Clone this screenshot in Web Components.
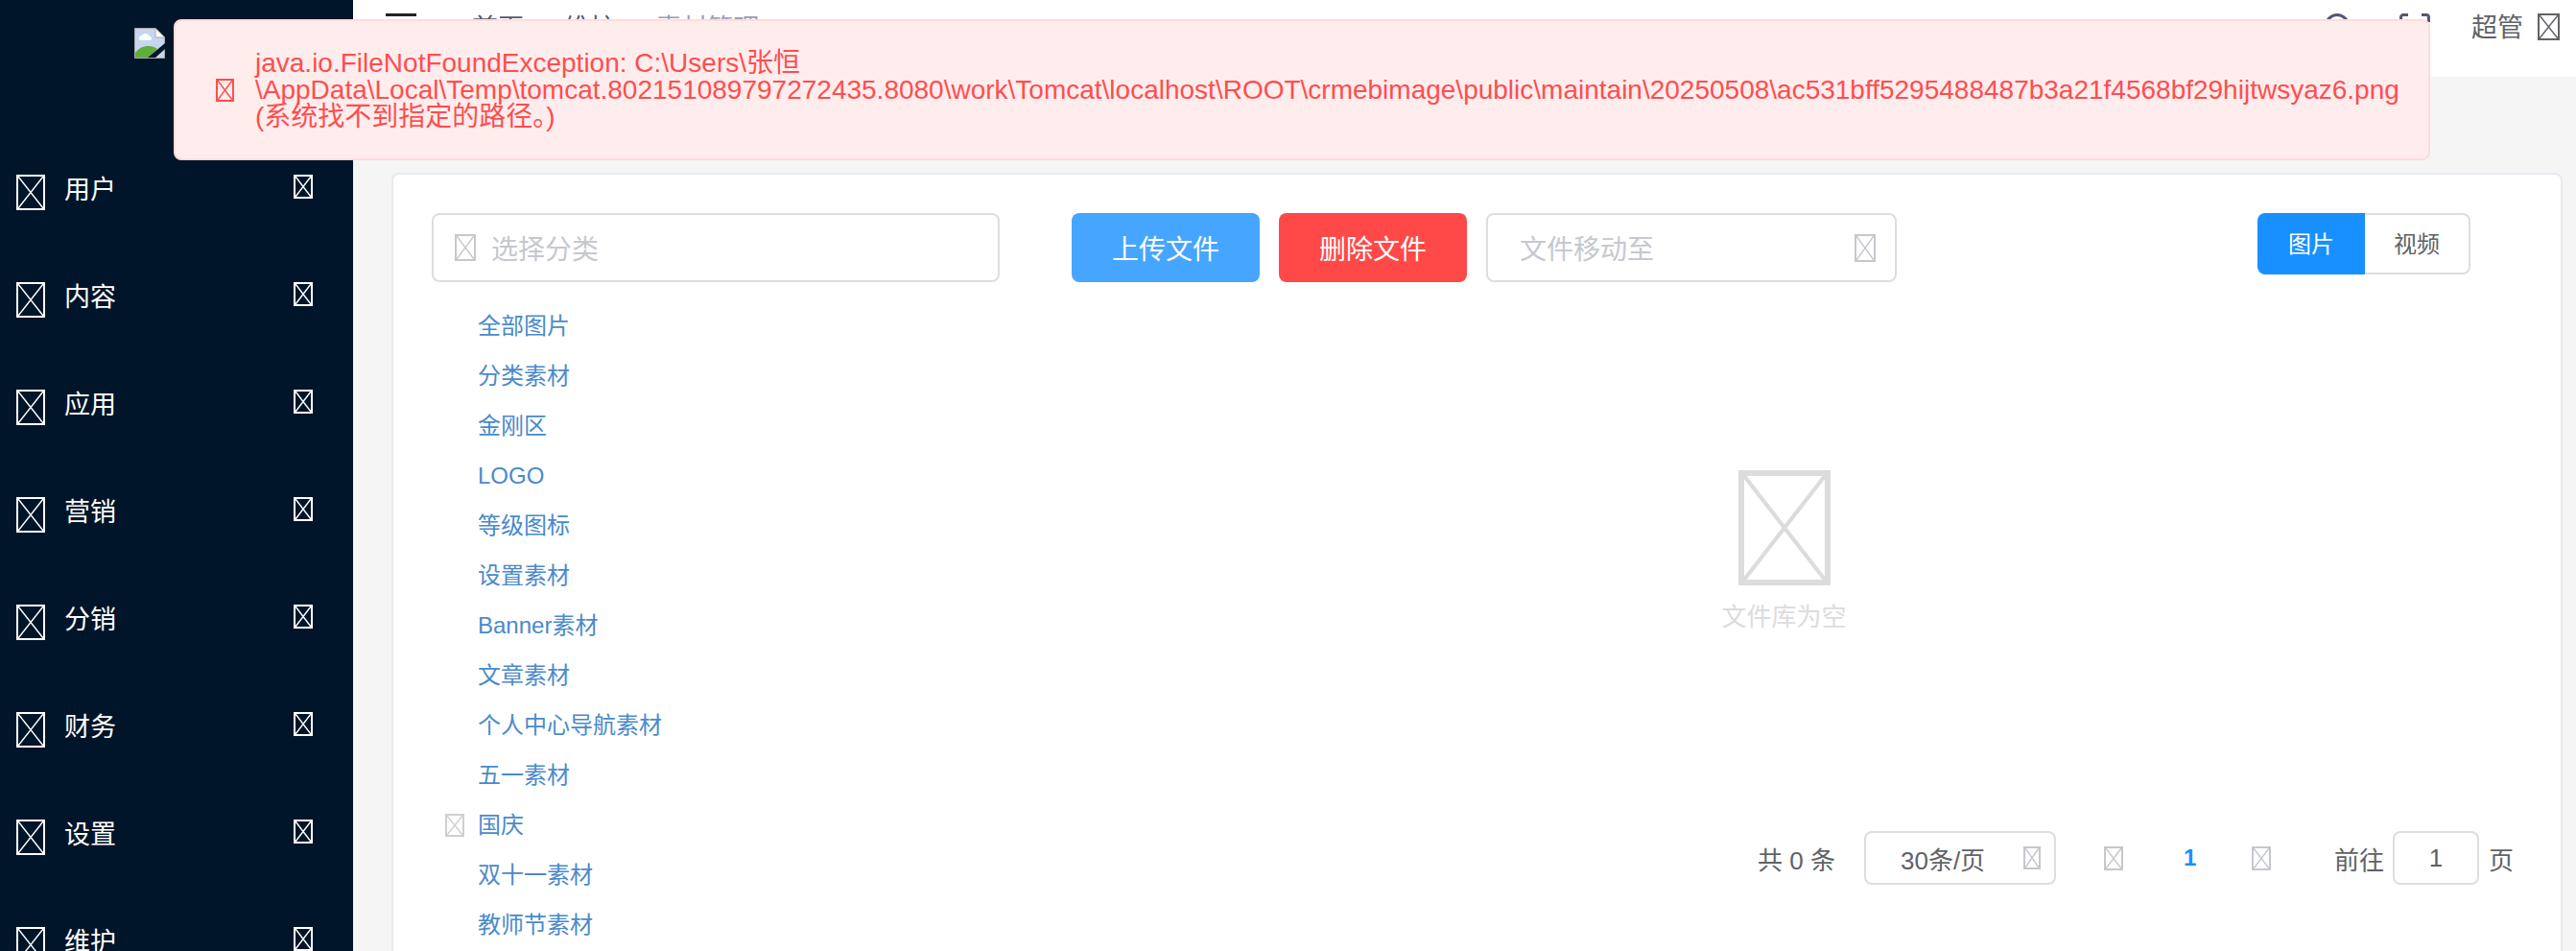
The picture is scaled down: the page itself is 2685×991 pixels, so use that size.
<!DOCTYPE html>
<html lang="zh-CN">
<head>
<meta charset="utf-8">
<title>素材管理</title>
<style>
html, body {
    margin: 0;
    height: 100%;
    overflow: hidden;
    font-family: "Liberation Sans", "Noto Sans CJK SC", sans-serif;
}
</style>
</head>
<body>
<app-shell></app-shell>

<script>
class TofuIcon extends HTMLElement {
    connectedCallback() {
        const w = this.getAttribute("w") || 20;
        const h = this.getAttribute("h") || 24;
        const color = this.getAttribute("color") || "#c5c8ce";
        const sw = this.getAttribute("sw") || 2;
        const half = sw / 2;
        this.attachShadow({ mode: "open" });
        this.shadowRoot.innerHTML = `
<style>
:host { display: inline-flex; flex: none; width: ${w}px; height: ${h}px; }
svg { display: block; }
</style>
<svg width="${w}" height="${h}" viewBox="0 0 ${w} ${h}" fill="none" stroke="${color}" stroke-width="${sw}">
    <rect x="${half}" y="${half}" width="${w - sw}" height="${h - sw}"/>
    <path d="M${sw} ${sw} L${w - sw} ${h - sw} M${w - sw} ${sw} L${sw} ${h - sw}" stroke-width="${sw * 0.7}"/>
</svg>`;
    }
}

class MenuItem extends HTMLElement {
    connectedCallback() {
        this.attachShadow({ mode: "open" });
        this.shadowRoot.innerHTML = `
<style>
:host {
    display: flex;
    height: 112px;
    padding: 38px 42px 0 17px;
    box-sizing: border-box;
    color: #fff;
    font-size: 27px;
    line-height: 32px;
}
.label { flex: 1; margin-left: 20px; }
</style>
<tofu-icon w="30" h="37" color="#fff"></tofu-icon>
<span class="label"><slot></slot></span>
<tofu-icon w="20" h="25" color="#fff"></tofu-icon>`;
    }
}

class SideMenu extends HTMLElement {
    connectedCallback() {
        const items = ["用户", "内容", "应用", "营销", "分销", "财务", "设置", "维护"];
        this.attachShadow({ mode: "open" });
        this.shadowRoot.innerHTML = `
<style>
:host {
    display: block;
    flex: none;
    width: 368px;
    height: 100%;
    overflow: hidden;
    background: #001529;
}
.logo { display: block; height: 144px; padding: 29px 0 0 140px; box-sizing: border-box; }
</style>
<div class="logo">
    <svg width="32" height="32" viewBox="0 0 32 32" style="display:block">
        <path d="M0.5 0.5H22L31.5 10V31.5H0.5Z" fill="#c6d6f0" stroke="#a8a8a8"/>
        <path d="M22 0.5V10H31.5Z" fill="#fff" stroke="#a8a8a8"/>
        <path d="M5 11a3 3 0 0 1 3-3a4.500 4.500 0 0 1 8 1a2 2 0 0 1 0 4H7a2 2 0 0 1-2-2Z" fill="#fff"/>
        <path d="M1 31V26C6 18 18 17 24 22L15 31Z" fill="#5fae3c"/>
        <path d="M14 31L32 16V22L22 31Z" fill="#001529"/>
    </svg>
</div>
${items.map(t => `<menu-item>${t}</menu-item>`).join("")}`;
    }
}

class TopBar extends HTMLElement {
    connectedCallback() {
        this.attachShadow({ mode: "open" });
        this.shadowRoot.innerHTML = `
<style>
:host {
    display: flex;
    align-items: flex-start;
    flex: none;
    height: 80px;
    box-sizing: border-box;
    padding: 14px 17px 0 34px;
    background: #fff;
    color: #606266;
    font-size: 27px;
    line-height: 30px;
}
.burger { width: 32px; height: 24px; margin-right: 58px; border-top: 3px solid #222; border-bottom: 3px solid #222; box-sizing: border-box; }
.crumbs { display: flex; gap: 13px; margin-top: 1px; color: #515a6e; }
.crumbs .now { color: #97a0b3; }
.tools { display: flex; align-items: flex-start; margin-left: auto; }
.search { margin-right: 50px; }
.full { margin-right: 43px; }
.user { margin-right: 15px; }
</style>
<div class="burger"></div>
<div class="crumbs"><span>首页</span><span>&gt;</span><span>维护</span><span>&gt;</span><span class="now">素材管理</span></div>
<div class="tools">
    <svg class="search" width="28" height="32" viewBox="0 0 28 32" fill="none" stroke="#515a6e" stroke-width="3"><circle cx="13" cy="13" r="11.500"/><path d="M21 21l6 7"/></svg>
    <svg class="full" width="32" height="28" viewBox="0 0 32 28" fill="none" stroke="#515a6e" stroke-width="3"><path d="M1.500 9V4a2.500 2.500 0 0 1 2.500-2.500h5M23 1.500h5a2.500 2.500 0 0 1 2.500 2.500v5M30.500 19v5a2.500 2.500 0 0 1-2.500 2.500h-5M9 26.500H4a2.500 2.500 0 0 1-2.500-2.500v-5"/></svg>
    <span class="user">超管</span>
    <tofu-icon w="23" h="28" color="#606266"></tofu-icon>
</div>`;
    }
}

class AppToast extends HTMLElement {
    connectedCallback() {
        this.attachShadow({ mode: "open" });
        this.shadowRoot.innerHTML = `
<style>
:host {
    position: absolute;
    top: 20px;
    left: 181px;
    width: 2352px;
    height: 147px;
    box-sizing: border-box;
    display: flex;
    align-items: center;
    padding-left: 42px;
    background: #ffeded;
    border: 2px solid #ffdbdb;
    border-radius: 8px;
    color: #ff4d4f;
    font-size: 28px;
    line-height: 28px;
    z-index: 10;
}
.msg { margin-left: 22px; white-space: nowrap; }
</style>
<tofu-icon w="19" h="24" color="#ff4d4f"></tofu-icon>
<div class="msg"><slot></slot></div>`;
    }
}

class BaseField extends HTMLElement {
    connectedCallback() {
        const w = this.getAttribute("w");
        const h = this.getAttribute("h") || 72;
        this.attachShadow({ mode: "open" });
        this.shadowRoot.innerHTML = `
<style>
:host {
    display: flex;
    align-items: center;
    flex: none;
    width: ${w}px;
    height: ${h}px;
    box-sizing: border-box;
    padding: ${this.getAttribute("pad") || "0 20px"};
    background: #fff;
    border: 2px solid #dcdee2;
    border-radius: 8px;
    color: var(--field-color, #c5c8ce);
    font-size: var(--field-size, 28px);
    justify-content: var(--field-justify, flex-start);
}
</style>
<slot></slot>`;
    }
}

class CategoryTree extends HTMLElement {
    connectedCallback() {
        const rows = ["全部图片", "分类素材", "金刚区", "LOGO", "等级图标", "设置素材", "Banner素材", "文章素材",
            "个人中心导航素材", "五一素材", "国庆", "双十一素材", "教师节素材"];
        this.attachShadow({ mode: "open" });
        this.shadowRoot.innerHTML = `
<style>
:host { display: block; padding-top: 20px; color: #4a8acb; font-size: 24px; line-height: 30px; }
.row { display: flex; align-items: center; height: 52px; padding-left: 48px; }
.row.icon { padding-left: 14px; gap: 14px; }
</style>
${rows.map(r => r === "国庆"
    ? `<div class="row icon"><tofu-icon w="20" h="24" color="#cfcfd4"></tofu-icon>${r}</div>`
    : `<div class="row">${r}</div>`).join("")}`;
    }
}

class FileToolbar extends HTMLElement {
    connectedCallback() {
        this.attachShadow({ mode: "open" });
        this.shadowRoot.innerHTML = `
<style>
:host { display: flex; align-items: flex-start; gap: 20px; padding: 0 94px 0 75px; }
.btn { display: flex; align-items: center; justify-content: center; width: 196px; height: 72px; border-radius: 8px; color: #fff; font-size: 28px; }
.up { background: #46a6ff; }
.del { background: #ff4949; }
.move span { flex: 1; padding-left: 13px; }
.toggle { display: flex; margin-left: auto; width: 222px; height: 64px; font-size: 24px; }
.toggle div { display: flex; align-items: center; justify-content: center; box-sizing: border-box; padding-bottom: 3px; }
.on { width: 112px; background: #1890ff; color: #fff; border-radius: 8px 0 0 8px; }
.off { flex: 1; background: #fff; color: #606266; border: 2px solid #dcdee2; border-left: 0; border-radius: 0 8px 8px 0; }
</style>
<div class="btn up">上传文件</div>
<div class="btn del">删除文件</div>
<base-field class="move" w="428"><span>文件移动至</span><tofu-icon w="22" h="29"></tofu-icon></base-field>
<div class="toggle"><div class="on">图片</div><div class="off">视频</div></div>`;
    }
}

class EmptyState extends HTMLElement {
    connectedCallback() {
        this.attachShadow({ mode: "open" });
        this.shadowRoot.innerHTML = `
<style>
:host { display: flex; flex-direction: column; align-items: center; margin: 196px 0 0 8px; color: #dcdcdc; font-size: 26px; }
.txt { margin-top: 18px; line-height: 30px; }
</style>
<tofu-icon w="96" h="120" sw="6" color="#dcdcdc"></tofu-icon>
<div class="txt">文件库为空</div>`;
    }
}

class PagerBar extends HTMLElement {
    connectedCallback() {
        this.attachShadow({ mode: "open" });
        this.shadowRoot.innerHTML = `
<style>
:host {
    display: flex;
    align-items: center;
    justify-content: flex-end;
    height: 56px;
    margin-top: 208px;
    padding-right: 49px;
    color: #606266;
    font-size: 26px;
    --field-color: #606266;
    --field-size: 26px;
}
.total { margin-right: 30px; }
.prev { margin-left: 50px; }
.cur { width: 8px; margin: 0 63px; color: #1890ff; font-weight: 700; text-align: center; font-size: 24px; }
.go { margin: 0 9px 0 66px; }
.unit { margin-left: 10px; }
.num { --field-justify: center; }
</style>
<span class="total">共 0 条</span>
<base-field class="size" w="200" h="56" pad="0 14px 0 36px"><span style="flex:1">30条/页</span><tofu-icon w="18" h="24"></tofu-icon></base-field>
<tofu-icon class="prev" w="20" h="25"></tofu-icon>
<span class="cur">1</span>
<tofu-icon w="20" h="25"></tofu-icon>
<span class="go">前往</span>
<base-field class="num" w="90" h="56" pad="0">1</base-field>
<span class="unit">页</span>`;
    }
}

class MaterialCard extends HTMLElement {
    connectedCallback() {
        this.attachShadow({ mode: "open" });
        this.shadowRoot.innerHTML = `
<style>
:host {
    display: flex;
    box-sizing: border-box;
    height: 1000px;
    margin: 100px 14px 0 40px;
    padding: 40px 0 0 40px;
    background: #fff;
    border: 2px solid #e8eaf2;
    border-radius: 8px;
}
.side { flex: none; width: 592px; }
.main { flex: 1; min-width: 0; }
.pick tofu-icon { margin-right: 16px; }
</style>
<div class="side">
    <base-field class="pick" w="592" pad="0 22px"><tofu-icon w="22" h="28"></tofu-icon><span>选择分类</span></base-field>
    <category-tree></category-tree>
</div>
<div class="main">
    <file-toolbar></file-toolbar>
    <empty-state></empty-state>
    <pager-bar></pager-bar>
</div>`;
    }
}

class AppShell extends HTMLElement {
    connectedCallback() {
        this.attachShadow({ mode: "open" });
        this.shadowRoot.innerHTML = `
<style>
:host { display: flex; position: relative; height: 100vh; overflow: hidden; background: #f5f5f5; }
.content { flex: 1; min-width: 0; overflow: hidden; }
</style>
<side-menu></side-menu>
<div class="content">
    <top-bar></top-bar>
    <material-card></material-card>
</div>
<app-toast>java.io.FileNotFoundException: C:\\Users\\张恒<br>\\AppData\\Local\\Temp\\tomcat.802151089797272435.8080\\work\\Tomcat\\localhost\\ROOT\\crmebimage\\public\\maintain\\20250508\\ac531bff5295488487b3a21f4568bf29hijtwsyaz6.png<br>(系统找不到指定的路径。)</app-toast>`;
    }
}

customElements.define("tofu-icon", TofuIcon);
customElements.define("menu-item", MenuItem);
customElements.define("side-menu", SideMenu);
customElements.define("top-bar", TopBar);
customElements.define("app-toast", AppToast);
customElements.define("base-field", BaseField);
customElements.define("category-tree", CategoryTree);
customElements.define("file-toolbar", FileToolbar);
customElements.define("empty-state", EmptyState);
customElements.define("pager-bar", PagerBar);
customElements.define("material-card", MaterialCard);
customElements.define("app-shell", AppShell);
</script>
</body>
</html>
